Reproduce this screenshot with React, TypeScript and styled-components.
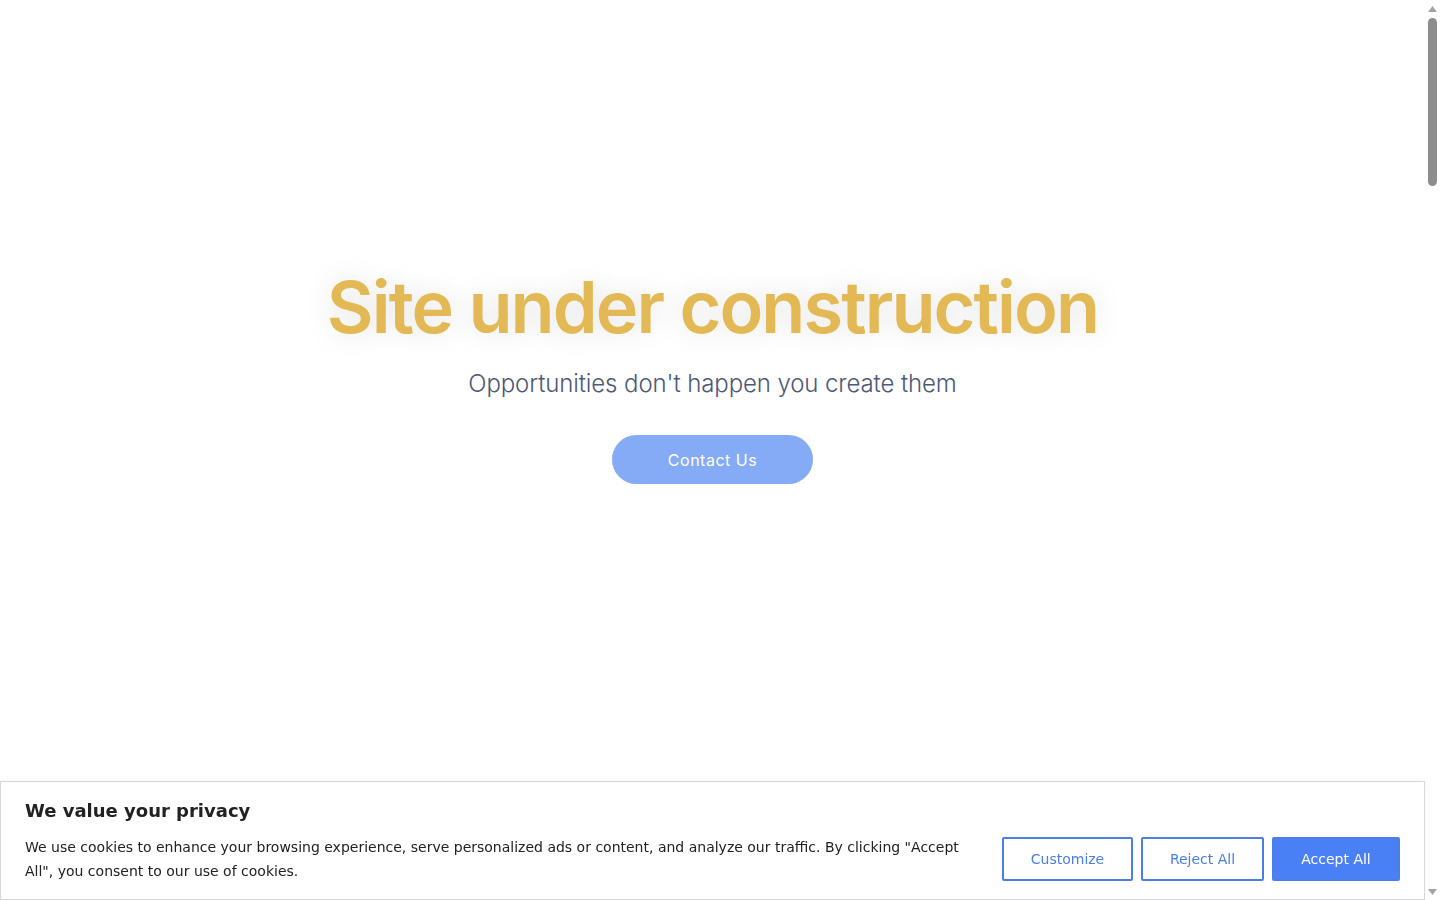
import React from 'react'
import styled, { createGlobalStyle } from 'styled-components'

const GlobalStyle = createGlobalStyle`
	html, body {
		margin: 0;
		padding: 0;
		height: 100%;
		overflow: hidden;
		background: #ffffff;
	}
	body {
		font-family: 'DejaVu Sans', 'Liberation Sans', sans-serif;
	}
`

const Frame = styled.div`
	display: flex;
	height: 100vh;
	background: #ffffff;
`

const Viewport = styled.main`
	flex: 1;
	min-width: 0;
	overflow: hidden;
`

const ScrollRail = styled.div`
	display: flex;
	flex-direction: column;
	align-items: center;
	width: 15px;
	flex-shrink: 0;
	background: #ffffff;
`

const RailArrow = styled.div`
	display: flex;
	align-items: center;
	justify-content: center;
	height: 17px;
	width: 100%;
`

const RailTrack = styled.div`
	flex: 1;
	display: flex;
	justify-content: center;
	padding-top: 1px;
`

const RailThumb = styled.div`
	width: 9px;
	height: 168px;
	border-radius: 5px;
	background: #8d8d8d;
`

const Page = styled.div`
	min-height: 4690px;
`

const Hero = styled.section`
	display: flex;
	flex-direction: column;
	align-items: center;
	padding-top: 264px;
	font-family: 'Inter', 'Lato', sans-serif;
`

const Title = styled.h1`
	margin: 0;
	font-size: 72px;
	line-height: 86px;
	font-weight: 600;
	letter-spacing: -1.9px;
	color: #e3b955;
	text-shadow: 0 0 30px rgba(0, 0, 0, 0.12);
`

const Subtitle = styled.p`
	margin: 18px 0 0;
	font-size: 24px;
	line-height: 32px;
	font-weight: 300;
	letter-spacing: -0.1px;
	color: #4b5877;
`

const ContactButton = styled.button`
	margin-top: 35px;
	width: 201px;
	height: 49px;
	border: none;
	border-radius: 25px;
	background: #85aaf6;
	color: #ffffff;
	font-family: inherit;
	font-size: 16px;
	font-weight: 400;
	letter-spacing: 0.5px;
	cursor: pointer;
`

const Banner = styled.div`
	position: fixed;
	left: 0;
	right: 15px;
	bottom: 0;
	box-sizing: border-box;
	height: 119px;
	padding: 18px 24px 0;
	background: #ffffff;
	border: 1px solid #d4d8dd;
	box-shadow: 0 -1px 10px rgba(0, 0, 0, 0.04);
	color: #212121;
`

const BannerTitle = styled.h2`
	margin: 0;
	font-size: 18px;
	line-height: 22px;
	font-weight: 700;
	color: #212121;
`

const BannerRow = styled.div`
	display: flex;
	align-items: center;
	justify-content: space-between;
	gap: 40px;
	margin-top: 13px;
`

const BannerText = styled.p`
	margin: 0;
	max-width: 940px;
	font-size: 14px;
	line-height: 24px;
	color: #212121;
`

const Actions = styled.div`
	display: flex;
	gap: 8px;
	flex-shrink: 0;
`

const ConsentButton = styled.button<{ $primary?: boolean; $w: number }>`
	box-sizing: border-box;
	width: ${(p) => p.$w}px;
	height: 44px;
	border: 2px solid #4b7fe5;
	border-radius: 2px;
	background: ${(p) => (p.$primary ? '#4a80f5' : '#ffffff')};
	color: ${(p) => (p.$primary ? '#ffffff' : '#4a7fe0')};
	font-family: 'DejaVu Sans', sans-serif;
	font-size: 14px;
	cursor: pointer;
`

const Arrow = ({ down }: { down?: boolean }) => (
	<svg width="9" height="6" viewBox="0 0 9 6">
		<path d={down ? 'M0 0h9L4.5 6z' : 'M4.5 0L9 6H0z'} fill="#a3a3a3" />
	</svg>
)

export default function App() {
	return (
		<Frame>
			<GlobalStyle />
			<Viewport>
				<Page>
					<Hero>
						<Title>Site under construction</Title>
						<Subtitle>Opportunities don't happen you create them</Subtitle>
						<ContactButton>Contact Us</ContactButton>
					</Hero>
				</Page>
			</Viewport>
			<ScrollRail>
				<RailArrow>
					<Arrow />
				</RailArrow>
				<RailTrack>
					<RailThumb />
				</RailTrack>
				<RailArrow>
					<Arrow down />
				</RailArrow>
			</ScrollRail>
			<Banner>
				<BannerTitle>We value your privacy</BannerTitle>
				<BannerRow>
					<BannerText>
						We use cookies to enhance your browsing experience, serve personalized ads or content, and analyze our traffic. By clicking "Accept All", you consent to our use of cookies.
					</BannerText>
					<Actions>
						<ConsentButton $w={131}>Customize</ConsentButton>
						<ConsentButton $w={123}>Reject All</ConsentButton>
						<ConsentButton $w={128} $primary>
							Accept All
						</ConsentButton>
					</Actions>
				</BannerRow>
			</Banner>
		</Frame>
	)
}
